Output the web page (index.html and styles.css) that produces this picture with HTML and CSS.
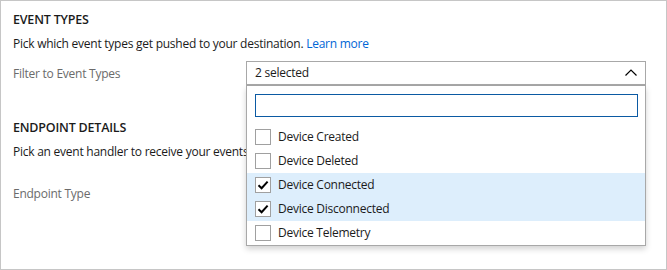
FILE: index.html
```html
<!DOCTYPE html>
<html lang="en">
<head>
    <meta charset="UTF-8">
    <title>Event Subscription</title>
    <link rel="stylesheet" href="styles.css">
</head>
<body>
<div id="container">
    <div class="section">
        <div class="heading">EVENT TYPES</div>
        <div class="desc">Pick which event types get pushed to your destination. <a class="link" href="#">Learn more</a></div>
        <div class="fieldrow">
            <div class="label">Filter to Event Types</div>
            <div class="dropwrap">
                <div class="dropfield">
                    <span>2 selected</span>
                    <svg class="chevron" width="12" height="7" viewBox="0 0 12 7"><path d="M0.5 6.5 L6 1 L11.5 6.5" fill="none" stroke="#000" stroke-width="1.2"/></svg>
                </div>
                <div class="droppanel">
                    <div class="search"></div>
                    <div class="options">
                        <div class="option"><span class="checkbox"></span>Device Created</div>
                        <div class="option"><span class="checkbox"></span>Device Deleted</div>
                        <div class="option selected"><span class="checkbox"><svg width="14" height="14" viewBox="0 0 14 14"><path d="M2.5 7.2 L5.6 10.2 L11.6 3.6" fill="none" stroke="#000" stroke-width="2"/></svg></span>Device Connected</div>
                        <div class="option selected"><span class="checkbox"><svg width="14" height="14" viewBox="0 0 14 14"><path d="M2.5 7.2 L5.6 10.2 L11.6 3.6" fill="none" stroke="#000" stroke-width="2"/></svg></span>Device Disconnected</div>
                        <div class="option"><span class="checkbox"></span>Device Telemetry</div>
                    </div>
                </div>
            </div>
        </div>
    </div>
    <div class="section second">
        <div class="heading">ENDPOINT DETAILS</div>
        <div class="desc">Pick an event handler to receive your events</div>
        <div class="fieldrow endpoint">
            <div class="label">Endpoint Type</div>
        </div>
    </div>
</div>
</body>
</html>
```

FILE: styles.css
```css
html, body {
    margin: 0;
    padding: 0;
}

body {
    width: 667px;
    height: 270px;
    box-sizing: border-box;
    border: 1px solid #c6c6c6;
    background-color: #ffffff;
    font-family: "Open Sans", "Noto Sans", sans-serif;
    font-size: 12px;
    letter-spacing: -0.25px;
    color: #1b1b1b;
    overflow: hidden;
}

#container {
    padding-left: 12px;
}

.heading {
    margin-top: 9px;
    height: 20px;
    line-height: 20px;
    font-size: 12.5px;
    font-weight: 600;
    letter-spacing: -0.2px;
}

.desc {
    margin-top: 4px;
    height: 20px;
    line-height: 20px;
    white-space: nowrap;
}

.link {
    color: #0066d6;
    text-decoration: none;
}

.fieldrow {
    display: flex;
    align-items: center;
    margin-top: 7px;
    height: 24px;
}

.label {
    width: 233px;
    color: #6b6b6b;
}

.second .heading {
    margin-top: 33px;
}

.endpoint {
    margin-top: 19px;
}

.dropwrap {
    position: relative;
    width: 400px;
}

.dropfield {
    display: flex;
    align-items: center;
    justify-content: space-between;
    height: 22px;
    border: 1px solid #a8a8a8;
    border-bottom-width: 2px;
    padding-left: 8px;
    padding-right: 8px;
}

.chevron {
    display: block;
}

.droppanel {
    position: absolute;
    left: 0;
    top: 25px;
    width: 398px;
    background-color: #ffffff;
    border: 1px solid #a8a8a8;
    border-top: none;
    box-shadow: 0 3px 6px rgba(0, 0, 0, 0.18);
    z-index: 2;
}

.search {
    margin: 8px 7px 0 8px;
    height: 21px;
    border: 1px solid #0b5aa3;
}

.options {
    margin-top: 8px;
}

.option {
    display: flex;
    align-items: center;
    height: 24px;
    padding-left: 8px;
    gap: 7px;
}

.option.selected {
    background-color: #ddeefc;
}

.checkbox {
    display: flex;
    align-items: center;
    justify-content: center;
    width: 14px;
    height: 14px;
    border: 1px solid #a0a0a0;
    background-color: #ffffff;
}
```
